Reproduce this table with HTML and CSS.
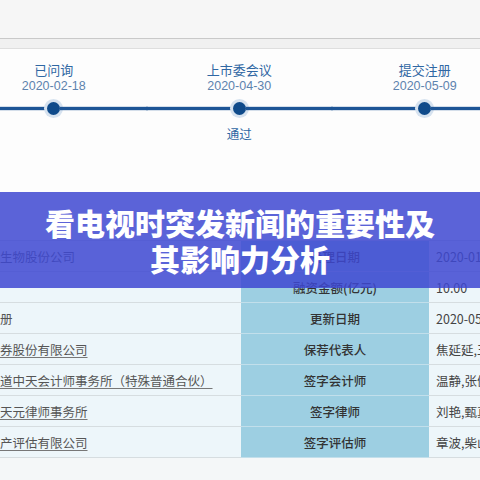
FILE: index.html
```html
<!DOCTYPE html>
<html lang="zh">
<head>
<meta charset="utf-8">
<link rel="stylesheet" href="styles.css">
</head>
<body>
<div class="page">
  <div class="topbar"></div>
  <div class="subbar"></div>
  <section class="timeline">
    <div class="step">
      <div class="step-label">已问询</div>
      <div class="step-date">2020-02-18</div>
      <div class="rail"><span class="dot"></span></div>
      <div class="step-note"></div>
    </div>
    <div class="step">
      <div class="step-label">上市委会议</div>
      <div class="step-date">2020-04-30</div>
      <div class="rail"><span class="dot"></span></div>
      <div class="step-note">通过</div>
    </div>
    <div class="step">
      <div class="step-label">提交注册</div>
      <div class="step-date">2020-05-09</div>
      <div class="rail"><span class="dot"></span></div>
      <div class="step-note"></div>
    </div>
  </section>
  <section class="info">
    <div class="cell left">生物股份公司</div>
    <div class="cell label">受理日期</div>
    <div class="cell value">2020-01-20</div>

    <div class="cell left"></div>
    <div class="cell label">融资金额(亿元)</div>
    <div class="cell value">10.00</div>

    <div class="cell left">册</div>
    <div class="cell label">更新日期</div>
    <div class="cell value">2020-05-09</div>

    <div class="cell left"><span class="link">券股份有限公司</span></div>
    <div class="cell label">保荐代表人</div>
    <div class="cell value">焦延延,王</div>

    <div class="cell left"><span class="link">道中天会计师事务所（特殊普通合伙）</span></div>
    <div class="cell label">签字会计师</div>
    <div class="cell value">温静,张健</div>

    <div class="cell left"><span class="link">天元律师事务所</span></div>
    <div class="cell label">签字律师</div>
    <div class="cell value">刘艳,甄真</div>

    <div class="cell left"><span class="link">产评估有限公司</span></div>
    <div class="cell label">签字评估师</div>
    <div class="cell value">章波,柴山</div>
  </section>
  <div class="banner">
    <h1 class="banner-title">看电视时突发新闻的重要性及其影响力分析</h1>
  </div>
</div>
</body>
</html>
```
FILE: styles.css
```css
* { box-sizing: border-box; }
html, body { margin: 0; padding: 0; }
body {
  width: 480px;
  height: 480px;
  overflow: hidden;
  background: #f4f7f8;
  font-family: "Liberation Sans", "Noto Sans CJK SC", sans-serif;
}
.page {
  position: relative;
  width: 480px;
  height: 480px;
  overflow: hidden;
}
.topbar {
  height: 39px;
  background: #f6f6f6;
  border-bottom: 1px solid #c9c9c9;
}
.subbar {
  height: 10px;
  background: #f0f0f0;
  border-bottom: 1px solid #dedede;
}
.timeline {
  display: flex;
  margin-left: -39px;
  padding-top: 12px;
  height: 191px;
  background: #fdfdfd;
}
.step {
  flex: 0 0 185.5px;
  display: flex;
  flex-direction: column;
  align-items: stretch;
  text-align: center;
}
.step-label {
  font-family: "Noto Sans CJK SC", sans-serif;
  font-size: 13px;
  line-height: 17px;
  color: #2f67a3;
}
.step-date {
  font-size: 12.5px;
  line-height: 17px;
  color: #5d83ae;
}
.rail {
  margin-top: 4px;
  height: 18px;
  display: flex;
  align-items: center;
}
.rail::before, .rail::after {
  content: "";
  flex: 1;
  height: 3px;
  background: #1d5596;
  box-shadow: 0 0 0 1px rgba(29, 85, 150, 0.18);
}
.dot {
  flex: 0 0 13px;
  width: 13px;
  height: 13px;
  border-radius: 50%;
  background: #0f4a8a;
  box-shadow: 0 0 0 3px #d6e2ef;
}
.step-note {
  margin-top: 8px;
  font-family: "Noto Sans CJK SC", sans-serif;
  font-size: 12.5px;
  line-height: 17px;
  color: #2f67a3;
}
.info {
  display: grid;
  grid-template-columns: 241px 188px 1fr;
  grid-auto-rows: 31px;
  border-top: 1px solid #d6dde0;
  font-family: "Noto Sans CJK SC", sans-serif;
  font-size: 12.5px;
}
.cell {
  display: flex;
  align-items: center;
  white-space: nowrap;
  overflow: hidden;
  border-bottom: 1px solid #d6dde0;
  background: #edf6fa;
  color: #555;
}
.left { padding-left: 0; }
.link {
  text-decoration: underline;
  text-decoration-color: #777;
  text-underline-offset: 2px;
}
.label {
  justify-content: center;
  background: #9dcfe2;
  border-bottom-color: #c2dfeb;
  color: #333;
  font-weight: 500;
}
.value {
  padding-left: 7px;
  color: #444;
}
.banner {
  position: absolute;
  left: 0;
  right: 0;
  top: 192px;
  height: 96px;
  display: flex;
  align-items: center;
  justify-content: center;
  background: rgba(62, 72, 209, 0.85);
}
.banner-title {
  margin: 0;
  max-width: 400px;
  text-align: center;
  color: #fff;
  font-family: "Noto Sans CJK SC", sans-serif;
  font-weight: 900;
  font-size: 30px;
  line-height: 36px;
}
```
